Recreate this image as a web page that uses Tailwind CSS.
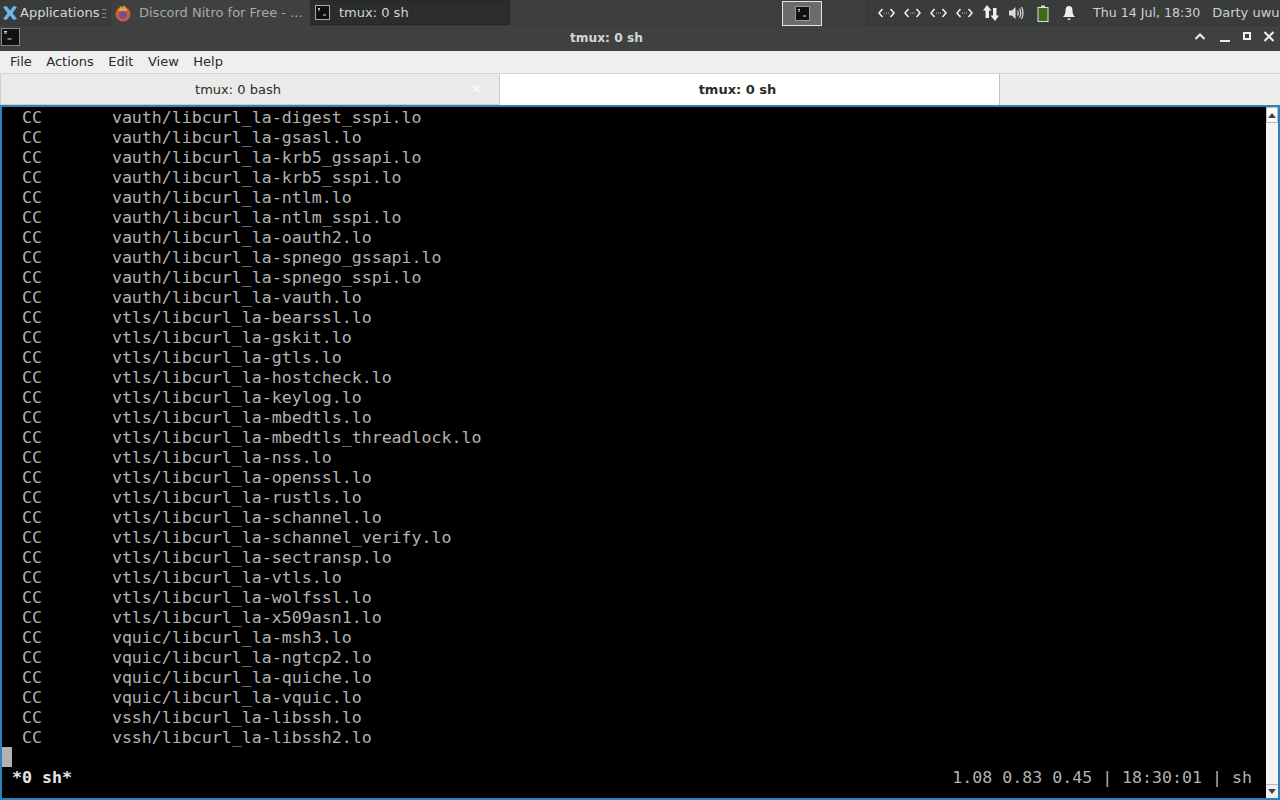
<!DOCTYPE html>
<html>
<head>
    <title>tmux: 0 sh</title>
    <meta name="viewport" content="width=device-width, initial-scale=1.0">
    <script src="https://cdn.jsdelivr.net/npm/@tailwindcss/browser@4"></script>
</head>
<body class="w-[1280px] h-[800px] overflow-hidden bg-black font-['DejaVu_Sans',sans-serif]">
    <!-- panel -->
    <div class="h-[26px] flex items-stretch bg-[#3a3c3c] text-[13px] text-[#d8d8d8] overflow-hidden">
        <div class="w-[110px] flex items-center shrink-0 pl-[2px]">
            <svg width="16" height="16" viewBox="0 0 16 16" class="shrink-0"><path d="M1 2L4.500 1L8 5.500L11.500 1L15 2L10.500 8L15 14L11.500 15L8 10.500L4.500 15L1 14L5.500 8Z" fill="#6cb8ee"/></svg>
            <span class="ml-[2px] whitespace-nowrap text-[13px]">Applications</span>
            <span class="ml-[3px] w-[4px] h-[9px] border-y border-[#888] flex items-center"><span class="w-full h-px bg-[#888]"></span></span>
        </div>
        <div class="w-[200px] flex items-center shrink-0 pl-[3px] bg-[#3f4141] border-l border-[#333]">
            <svg width="18" height="18" viewBox="0 0 18 18" class="shrink-0"><circle cx="9" cy="10" r="7.500" fill="#c9602f"/><circle cx="9" cy="11" r="4" fill="#7a4a9c"/><path d="M4 7L6.500 2L8.500 4.500L10 1L13.500 7Z" fill="#e8a33a"/></svg>
            <span class="ml-[7px] whitespace-nowrap text-[#a9a9a9]">Discord Nitro for Free - ...</span>
        </div>
        <div class="w-[200px] flex items-center shrink-0 pl-[4px] bg-[#2b2d2d] border border-[#252626] mb-px">
            <svg width="15" height="15" viewBox="0 0 15 15" class="shrink-0"><rect x="0.500" y="0.500" width="14" height="14" fill="#111" stroke="#aaa"/><path d="M3 5h2M3 3.500h2M8 10h3" stroke="#ddd"/></svg>
            <span class="ml-[9px] whitespace-nowrap text-[#d4d4d4]">tmux: 0 sh</span>
        </div>
        <div class="w-[271px] shrink-0 bg-[#3c3e3e]"></div>
        <div class="w-[42px] shrink-0 flex items-center justify-center">
            <div class="w-[40px] h-[25px] bg-[#6a6c6c] border border-[#e4e4e4] flex items-center justify-center">
                <svg width="15" height="15" viewBox="0 0 15 15"><rect x="0.500" y="0.500" width="14" height="14" fill="#111" stroke="#999"/><path d="M3 5h2M3 3.500h2M8 10h3" stroke="#ddd"/></svg>
            </div>
        </div>
        <div class="w-[45px] shrink-0 bg-[#3c3e3e] border-r border-[#333]"></div>
        <div class="flex-1 flex items-center pl-[10px] whitespace-nowrap">
            <div class="flex gap-[9px]">
                <svg width="17" height="12" viewBox="0 0 17 12"><path d="M4.500 2L1 6L4.500 10M12.500 2L16 6L12.500 10" fill="none" stroke="#eee" stroke-width="1.600"/><path d="M6 6H11" stroke="#bbb" stroke-dasharray="1 1"/></svg>
                <svg width="17" height="12" viewBox="0 0 17 12"><path d="M4.500 2L1 6L4.500 10M12.500 2L16 6L12.500 10" fill="none" stroke="#eee" stroke-width="1.600"/><path d="M6 6H11" stroke="#bbb" stroke-dasharray="1 1"/></svg>
                <svg width="17" height="12" viewBox="0 0 17 12"><path d="M4.500 2L1 6L4.500 10M12.500 2L16 6L12.500 10" fill="none" stroke="#eee" stroke-width="1.600"/><path d="M6 6H11" stroke="#bbb" stroke-dasharray="1 1"/></svg>
                <svg width="17" height="12" viewBox="0 0 17 12"><path d="M4.500 2L1 6L4.500 10M12.500 2L16 6L12.500 10" fill="none" stroke="#eee" stroke-width="1.600"/><path d="M6 6H11" stroke="#bbb" stroke-dasharray="1 1"/></svg>
            </div>
            <svg width="18" height="18" viewBox="0 0 18 18" class="ml-[9px] shrink-0"><path d="M5 1L9.500 6.500H7V14H3.500V6.500H1Z" fill="#f0f0f0"/><path d="M13 17L8.500 11.500H11V4H14.500V11.500H17Z" fill="#f0f0f0"/></svg>
            <svg width="16" height="16" viewBox="0 0 16 16" class="ml-[8px] shrink-0"><path d="M1 5.500H4L7.500 2V14L4 10.500H1Z" fill="#ddd"/><path d="M9.500 5.500Q11 8 9.500 10.500M11.500 3.500Q14 8 11.500 12.500M13.500 2Q16.500 8 13.500 14" fill="none" stroke="#ddd" stroke-width="1.200"/></svg>
            <svg width="12" height="17" viewBox="0 0 12 17" class="ml-[13px] shrink-0"><rect x="4" y="0.500" width="4" height="2" fill="#ddd"/><rect x="1" y="2.500" width="10" height="14" fill="#3f6a1a" stroke="#ddd"/></svg>
            <svg width="14" height="16" viewBox="0 0 14 16" class="ml-[13px] shrink-0"><path d="M7 1C4.500 1 3.500 3 3.500 5.500C3.500 9 2.500 10.500 1 12H13C11.500 10.500 10.500 9 10.500 5.500C10.500 3 9.500 1 7 1Z" fill="#eee"/><path d="M5 13.500H9L7 15.500Z" fill="#eee"/></svg>
            <span class="ml-[17px] text-[12.600px] text-[#cfcfcf]">Thu 14 Jul, 18:30</span>
            <span class="ml-[12px] text-[#cfcfcf]">Darty uwu</span>
        </div>
    </div>

    <!-- title bar -->
    <div class="h-[25px] bg-[#3f4141] relative flex items-center text-[12.200px] font-bold text-[#d6d6d6]">
        <svg width="20" height="20" viewBox="0 0 20 20" class="absolute left-0 top-[1px]"><rect x="1.500" y="1.500" width="18" height="17" fill="#111" stroke="#888"/><path d="M4 6h3M4 4.500h3M7.500 12h4" stroke="#ddd"/></svg>
        <span class="ml-[570px]">tmux: 0 sh</span>
        <div class="absolute right-[5px] top-[5px] flex items-center gap-[11px]">
            <svg width="12" height="12" viewBox="0 0 12 12" class="mr-[2px]"><path d="M1.500 8L6 3.500L10.500 8" fill="none" stroke="#eee" stroke-width="2"/></svg>
            <svg width="12" height="12" viewBox="0 0 12 12"><path d="M1 10H11" stroke="#eee" stroke-width="2"/></svg>
            <svg width="10" height="12" viewBox="0 0 10 12"><rect x="2" y="2" width="6" height="6" fill="none" stroke="#eee" stroke-width="2"/></svg>
            <svg width="12" height="12" viewBox="0 0 12 12"><path d="M1.500 1L10.500 10M10.500 1L1.500 10" stroke="#eee" stroke-width="2"/></svg>
        </div>
    </div>

    <!-- menu -->
    <div class="h-[22px] bg-[#f0efee] flex items-center pl-[10px] gap-[14.500px] text-[13px] text-[#2a2a2a]">
        <span>File</span>
        <span>Actions</span>
        <span>Edit</span>
        <span>View</span>
        <span>Help</span>
    </div>

    <!-- tabs -->
    <div class="h-[32px] bg-[#efeeed] border-t border-[#d5d5d3] flex text-[13px] text-[#2a2a2a]">
        <div class="w-[500px] h-[31px] bg-[#eaeae8] border border-t-0 border-[#cfcfcd] flex items-center justify-center relative pt-[2px]">
            <span class="mr-[24px]">tmux: 0 bash</span>
            <span class="absolute left-[470px] top-[7px] text-[13px] text-white leading-[16px]">×</span>
        </div>
        <div class="w-[500px] h-[31px] bg-white border-r border-[#c4c4c2] flex items-center justify-center font-bold">
            <span class="mr-[24px]">tmux: 0 sh</span>
        </div>
    </div>

    <!-- terminal -->
    <div class="h-[695px] bg-black border-2 border-[#2a83b8] relative flex">
        <div class="flex-1 pt-px font-['DejaVu_Sans_Mono',monospace] text-[16.600px] leading-[20px] text-[#b2b2b2] relative">
<pre class="font-['DejaVu_Sans_Mono',monospace]">  CC       vauth/libcurl_la-digest_sspi.lo
  CC       vauth/libcurl_la-gsasl.lo
  CC       vauth/libcurl_la-krb5_gssapi.lo
  CC       vauth/libcurl_la-krb5_sspi.lo
  CC       vauth/libcurl_la-ntlm.lo
  CC       vauth/libcurl_la-ntlm_sspi.lo
  CC       vauth/libcurl_la-oauth2.lo
  CC       vauth/libcurl_la-spnego_gssapi.lo
  CC       vauth/libcurl_la-spnego_sspi.lo
  CC       vauth/libcurl_la-vauth.lo
  CC       vtls/libcurl_la-bearssl.lo
  CC       vtls/libcurl_la-gskit.lo
  CC       vtls/libcurl_la-gtls.lo
  CC       vtls/libcurl_la-hostcheck.lo
  CC       vtls/libcurl_la-keylog.lo
  CC       vtls/libcurl_la-mbedtls.lo
  CC       vtls/libcurl_la-mbedtls_threadlock.lo
  CC       vtls/libcurl_la-nss.lo
  CC       vtls/libcurl_la-openssl.lo
  CC       vtls/libcurl_la-rustls.lo
  CC       vtls/libcurl_la-schannel.lo
  CC       vtls/libcurl_la-schannel_verify.lo
  CC       vtls/libcurl_la-sectransp.lo
  CC       vtls/libcurl_la-vtls.lo
  CC       vtls/libcurl_la-wolfssl.lo
  CC       vtls/libcurl_la-x509asn1.lo
  CC       vquic/libcurl_la-msh3.lo
  CC       vquic/libcurl_la-ngtcp2.lo
  CC       vquic/libcurl_la-quiche.lo
  CC       vquic/libcurl_la-vquic.lo
  CC       vssh/libcurl_la-libssh.lo
  CC       vssh/libcurl_la-libssh2.lo</pre>
            <div class="w-[10px] h-[20px] bg-[#b2b2b2] -mt-px"></div>
            <div class="flex justify-between pl-[10px] pr-[14px] mt-px">
                <span class="font-bold text-[#e8e8e8]">*0 sh*</span>
                <span>1.08 0.83 0.45 | 18:30:01 | sh</span>
            </div>
        </div>
        <!-- scrollbar -->
        <div class="w-[12px] bg-[#f4f4f3] flex flex-col justify-between">
            <div class="h-[16px] bg-[#fafafa] border border-[#bbb] flex items-center justify-center">
                <svg width="8" height="5" viewBox="0 0 8 5"><path d="M0 5L4 0L8 5Z" fill="#444"/></svg>
            </div>
            <div class="h-[14px] bg-[#f0f0ef] border-t border-[#bbb] flex items-center justify-center">
                <svg width="8" height="5" viewBox="0 0 8 5"><path d="M0 0L4 5L8 0Z" fill="#444"/></svg>
            </div>
        </div>
    </div>
</body>
</html>
